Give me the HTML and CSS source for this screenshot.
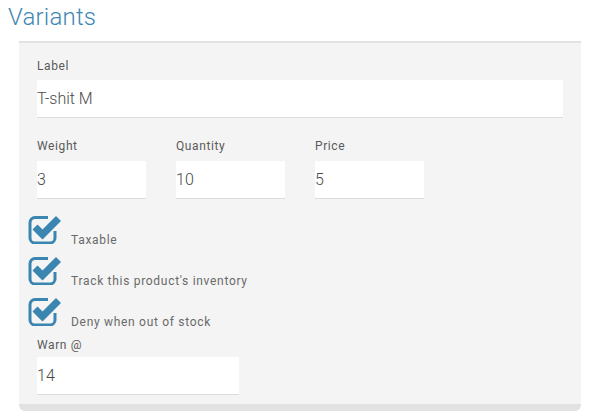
FILE: index.html
```html
<!DOCTYPE html>
<html>
<head>
<meta charset="utf-8">
<link rel="stylesheet" href="styles.css">
</head>
<body>
<h1 class="title">Variants</h1>
<div class="panel">
  <div class="field">
    <label class="field-label">Label</label>
    <div class="input input-wide">T-shit M</div>
  </div>
  <div class="row3">
    <div class="field">
      <label class="field-label">Weight</label>
      <div class="input input-small">3</div>
    </div>
    <div class="field">
      <label class="field-label">Quantity</label>
      <div class="input input-small">10</div>
    </div>
    <div class="field">
      <label class="field-label">Price</label>
      <div class="input input-small">5</div>
    </div>
  </div>
  <div class="checks">
    <div class="check-row">
      <svg class="check-icon" viewBox="0 0 36 30" width="36" height="30"><path d="M21 3.5H8A5 5 0 0 0 3 8.5V24A5 5 0 0 0 8 29H23A5 5 0 0 0 28 24V17" fill="none" stroke="#3b86b1" stroke-width="3"/><path d="M6.5 15.5L10.5 11.5L15.5 16.5L29 3L33 7L15.5 24.5Z" fill="#3b86b1" stroke="#3b86b1" stroke-width="1.5" stroke-linejoin="round"/></svg>
      <span class="check-text">Taxable</span>
    </div>
    <div class="check-row">
      <svg class="check-icon" viewBox="0 0 36 30" width="36" height="30"><path d="M21 3.5H8A5 5 0 0 0 3 8.5V24A5 5 0 0 0 8 29H23A5 5 0 0 0 28 24V17" fill="none" stroke="#3b86b1" stroke-width="3"/><path d="M6.5 15.5L10.5 11.5L15.5 16.5L29 3L33 7L15.5 24.5Z" fill="#3b86b1" stroke="#3b86b1" stroke-width="1.5" stroke-linejoin="round"/></svg>
      <span class="check-text">Track this product's inventory</span>
    </div>
    <div class="check-row">
      <svg class="check-icon" viewBox="0 0 36 30" width="36" height="30"><path d="M21 3.5H8A5 5 0 0 0 3 8.5V24A5 5 0 0 0 8 29H23A5 5 0 0 0 28 24V17" fill="none" stroke="#3b86b1" stroke-width="3"/><path d="M6.5 15.5L10.5 11.5L15.5 16.5L29 3L33 7L15.5 24.5Z" fill="#3b86b1" stroke="#3b86b1" stroke-width="1.5" stroke-linejoin="round"/></svg>
      <span class="check-text">Deny when out of stock</span>
    </div>
  </div>
  <div class="field field-warn">
    <label class="field-label">Warn @</label>
    <div class="input input-warn">14</div>
  </div>
</div>
</body>
</html>
```
FILE: styles.css
```css
html, body {
  margin: 0;
  padding: 0;
  background: #ffffff;
}
body {
  font-family: Roboto, "Liberation Sans", sans-serif;
  width: 592px;
  height: 420px;
  overflow: hidden;
}
.title {
  margin: 0;
  padding: 2px 0 0 8px;
  height: 41px;
  box-sizing: border-box;
  font-size: 24px;
  line-height: 30px;
  font-weight: 300;
  color: #3f87b3;
  letter-spacing: 0.2px;
}
.panel {
  margin-left: 19px;
  width: 562px;
  box-sizing: border-box;
  background: #f4f4f4;
  border-top: 2px solid #e3e3e3;
  border-bottom: 7px solid #e2e2e2;
  border-radius: 0 0 6px 6px;
  padding: 15px 18px 9px 18px;
}
.field {
  display: flex;
  flex-direction: column;
}
.field-label {
  font-size: 12px;
  line-height: 16px;
  color: #5a5a5a;
  letter-spacing: 0.6px;
  margin-bottom: 6px;
}
.input {
  background: #ffffff;
  border-bottom: 1px solid #dcdcdc;
  height: 37px;
  line-height: 37px;
  font-size: 16px;
  font-weight: 300;
  color: #4a4a4a;
  padding: 0;
  box-sizing: content-box;
}
.input-wide {
  width: 526px;
}
.row3 {
  display: flex;
  gap: 30px;
  margin-top: 20px;
}
.row3 .field-label {
  margin-bottom: 7px;
}
.input-small {
  width: 109px;
}
.checks {
  margin-top: 17px;
  margin-left: -10px;
  display: flex;
  flex-direction: column;
}
.check-row {
  height: 41px;
  display: flex;
  align-items: flex-start;
}
.check-icon {
  display: block;
  flex: none;
  margin-top: -2px;
}
.check-text {
  margin-left: 8px;
  margin-top: 16px;
  font-size: 12px;
  line-height: 16px;
  color: #6a6a6a;
  letter-spacing: 0.7px;
}
.field-warn {
  margin-top: -2px;
}
.field-warn .field-label {
  margin-bottom: 4px;
}
.input-warn {
  width: 202px;
}
```
